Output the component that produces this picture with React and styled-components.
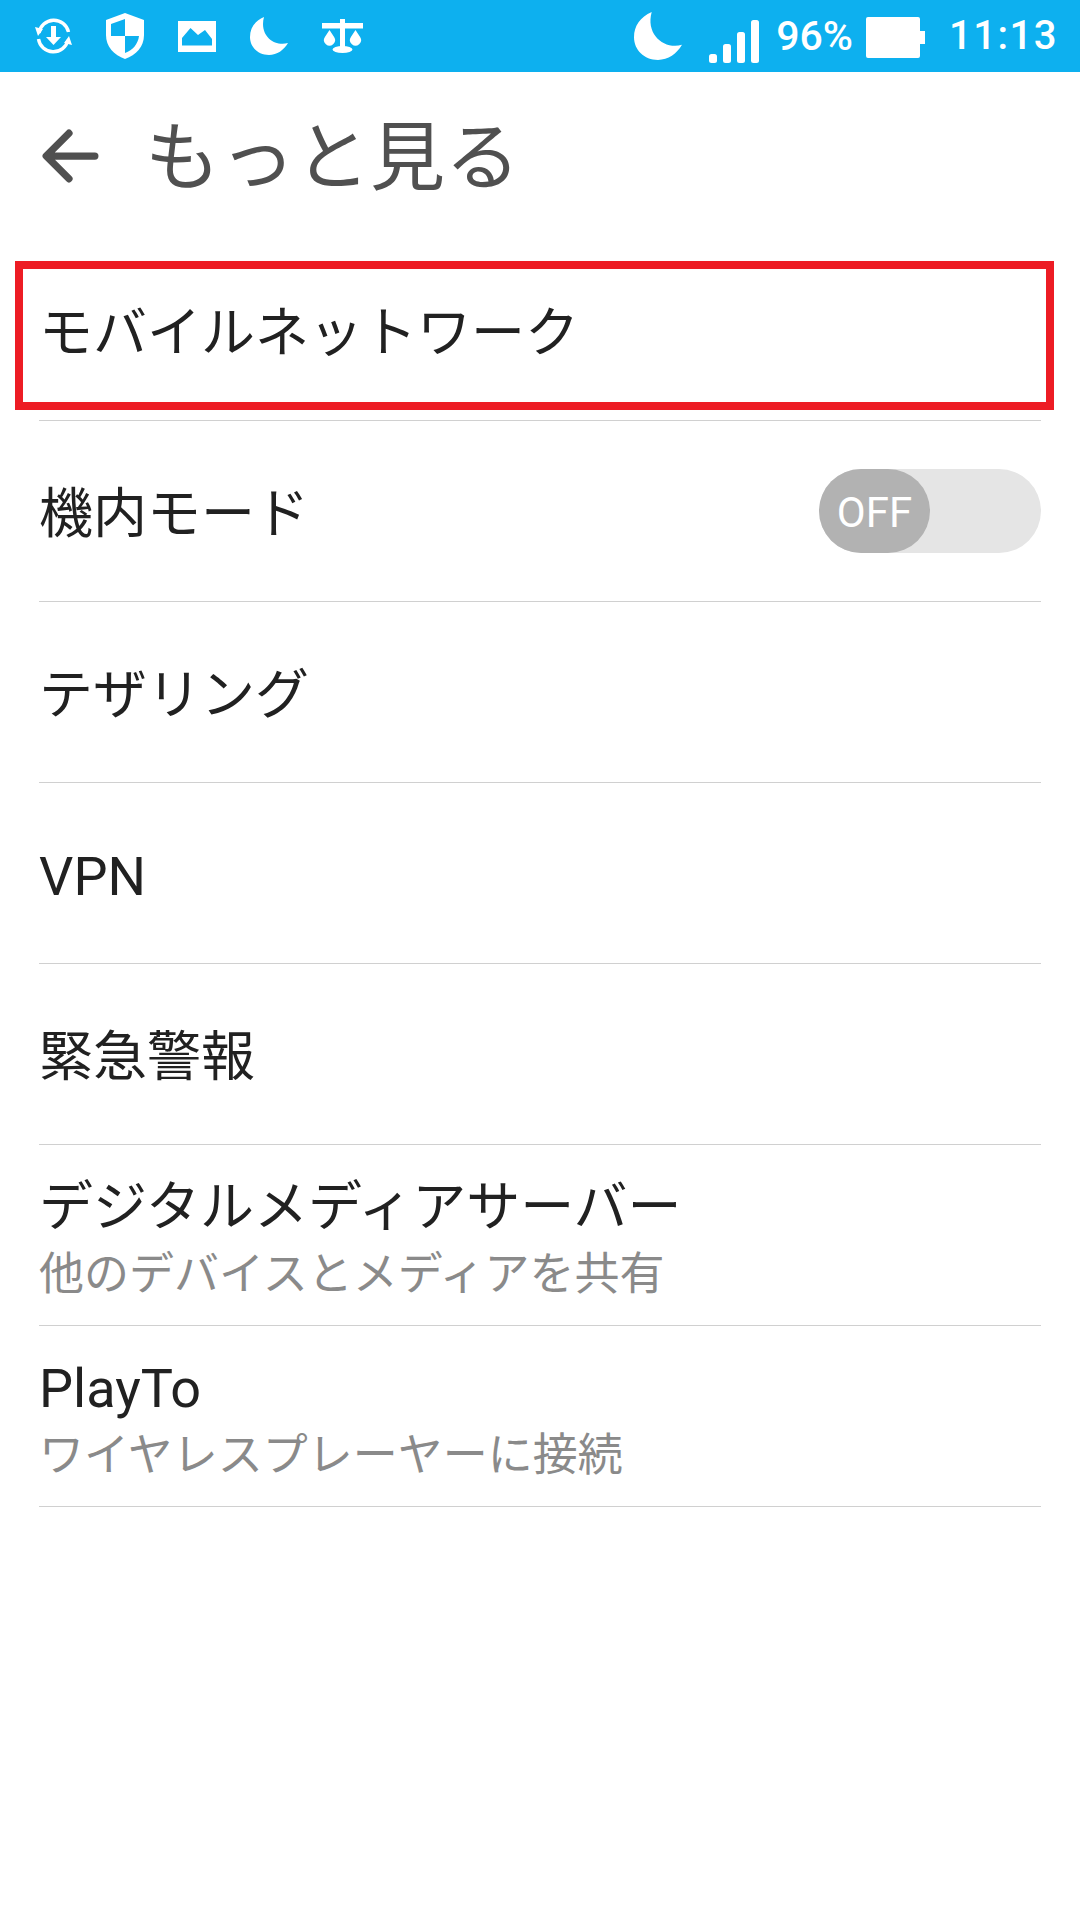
import React from 'react';
import styled, { createGlobalStyle } from 'styled-components';

const rows = [
    { title: 'モバイルネットワーク', marked: true },
    { title: '機内モード', toggle: true },
    { title: 'テザリング' },
    { title: 'VPN' },
    { title: '緊急警報' },
    { title: 'デジタルメディアサーバー', sub: '他のデバイスとメディアを共有' },
    { title: 'PlayTo', sub: 'ワイヤレスプレーヤーに接続' },
];

function App() {
    return (
        <Page>
            <GlobalStyle />
            <StatusBar>
                <StatusGroup>
                    <StatusIcon width="37" height="36" viewBox="0 0 37 36">
                        <path d="M4 15a15 15 0 0 1 29.500-1M3.500 21a15 15 0 0 0 29.500 1" fill="none" stroke="#fff" strokeWidth="3.400" />
                        <path d="M0 9l8 2-5 7zM37 27l-8-2 5-7z" fill="#fff" />
                        <path d="M16 8h5v11h5l-7.500 8-7.500-8h5z" fill="#fff" />
                    </StatusIcon>
                    <StatusIcon width="38" height="46" viewBox="0 0 38 46">
                        <path d="M19 0l19 7v15c0 12-8 20-19 24C8 42 0 34 0 22V7z" fill="#fff" />
                        <path d="M19 6L5 11v12h14zM19 23v17c8-3 13-9 14-17z" fill="#0db0ef" />
                    </StatusIcon>
                    <StatusIcon width="38" height="31" viewBox="0 0 38 31">
                        <path d="M0 0h38v31H0zM4 24.500h30V18l-7-9-7 5-7.500-7L4 17z" fill="#fff" fillRule="evenodd" />
                    </StatusIcon>
                    <StatusIcon width="38" height="38" viewBox="0 0 38 38">
                        <path d="M14 0C5 4 0 11 0 20c0 10 8 18 19 18 8 0 15-5 19-12-14 4-29-8-24-26z" fill="#fff" />
                    </StatusIcon>
                    <StatusIcon width="41" height="34" viewBox="0 0 41 34">
                        <path d="M0 4h18V0h5v4h18v5.500H23V28h-5V9.500H0z" fill="#fff" />
                        <ellipse cx="20.500" cy="30.500" rx="10" ry="3.500" fill="#fff" />
                        <path d="M7.500 11l4.600 7a5.500 5.500 0 1 1-9.200 0zM33.500 11l4.600 7a5.500 5.500 0 1 1-9.200 0z" fill="#fff" />
                    </StatusIcon>
                </StatusGroup>
                <StatusGroupRight>
                    <BigMoon width="48" height="48" viewBox="0 0 38 38">
                        <path d="M14 0C5 4 0 11 0 20c0 10 8 18 19 18 8 0 15-5 19-12-14 4-29-8-24-26z" fill="#fff" />
                    </BigMoon>
                    <SignalIcon width="50" height="43" viewBox="0 0 50 43">
                        <rect x="0" y="34" width="8" height="9" rx="2.500" fill="#fff" />
                        <rect x="14" y="24" width="8" height="19" rx="2.500" fill="#fff" />
                        <rect x="28" y="12" width="8" height="31" rx="2.500" fill="#fff" />
                        <rect x="42" y="0" width="8" height="43" rx="2.500" fill="#fff" />
                    </SignalIcon>
                    <Percent>96%</Percent>
                    <BatteryIcon width="59" height="41" viewBox="0 0 59 41">
                        <path d="M2 0h50a2 2 0 0 1 2 2v12h5v13h-5v12a2 2 0 0 1-2 2H2a2 2 0 0 1-2-2V2a2 2 0 0 1 2-2z" fill="#fff" />
                    </BatteryIcon>
                    <Clock>11:13</Clock>
                </StatusGroupRight>
            </StatusBar>

            <Header>
                <BackIcon width="58" height="58" viewBox="0 0 56 56">
                    <path d="M52 28H6M27 6L5 28l22 22" fill="none" stroke="#505050" strokeWidth="7" strokeLinecap="round" strokeLinejoin="round" />
                </BackIcon>
                <Title>もっと見る</Title>
            </Header>

            <List>
                {rows.map((row) => (
                    <Row key={row.title}>
                        <RowText>
                            <RowTitle>{row.title}</RowTitle>
                            {row.sub && <RowSub>{row.sub}</RowSub>}
                        </RowText>
                        {row.toggle && (
                            <Toggle>
                                <Knob>OFF</Knob>
                            </Toggle>
                        )}
                        {row.marked && <RedMark />}
                    </Row>
                ))}
            </List>
        </Page>
    );
}

const GlobalStyle = createGlobalStyle`
    html, body {
        margin: 0;
        padding: 0;
        background: #fff;
    }
`;

const Page = styled.div`
    width: 1080px;
    height: 1920px;
    background: #fff;
    overflow: hidden;
    font-family: Roboto, "Noto Sans CJK JP", sans-serif;
`;

const StatusBar = styled.div`
    height: 72px;
    background: #0db0ef;
    display: flex;
    align-items: center;
    justify-content: space-between;
    padding: 0 22px 0 35px;
    box-sizing: border-box;
`;

const StatusGroup = styled.div`
    display: flex;
    align-items: center;
    gap: 34px;
`;

const StatusGroupRight = styled.div`
    display: flex;
    align-items: center;
`;

const StatusIcon = styled.svg`
    flex: none;
    display: block;
`;

const BigMoon = styled(StatusIcon)`
    margin-right: 27px;
`;

const SignalIcon = styled(StatusIcon)`
    margin: 10px 17px 0 0;
`;

const BatteryIcon = styled(StatusIcon)`
    margin: 3px 24px 0 13px;
`;

const Percent = styled.span`
    color: #fff;
    font-size: 41px;
    font-weight: 500;
    line-height: 72px;
`;

const Clock = styled.span`
    color: #fff;
    font-size: 40px;
    font-weight: 500;
    letter-spacing: 1.500px;
    line-height: 72px;
`;

const Header = styled.div`
    height: 168px;
    padding: 0 0 10px 41px;
    box-sizing: border-box;
    display: flex;
    align-items: center;
`;

const BackIcon = styled.svg`
    flex: none;
    display: block;
    margin-top: 10px;
`;

const Title = styled.h1`
    margin: 0 0 0 46px;
    font-size: 75px;
    font-weight: 400;
    color: #505050;
`;

const List = styled.div`
    padding: 0 39px;
`;

const Row = styled.div`
    position: relative;
    height: 181px;
    border-bottom: 1px solid #d0d0d0;
    box-sizing: border-box;
    display: flex;
    align-items: center;
    justify-content: space-between;
`;

const RowText = styled.div`
    display: flex;
    flex-direction: column;
    padding-top: 8px;
`;

const RowTitle = styled.div`
    font-size: 54px;
    line-height: 64px;
    color: #212121;
`;

const RowSub = styled.div`
    margin-top: 8px;
    font-size: 45px;
    line-height: 54px;
    color: #8a8a8a;
`;

const Toggle = styled.div`
    width: 222px;
    height: 84px;
    margin-bottom: 1px;
    border-radius: 42px;
    background: #e5e5e5;
`;

const Knob = styled.div`
    width: 111px;
    height: 84px;
    border-radius: 42px;
    background: #b2b2b2;
    color: #fff;
    font-size: 42px;
    line-height: 87px;
    text-align: center;
`;

// 赤い枠は行の上に重ねる注釈
const RedMark = styled.div`
    position: absolute;
    left: -24px;
    right: -13px;
    top: 21px;
    height: 149px;
    border: 8px solid #ed1c24;
    box-sizing: border-box;
`;

export default App;
